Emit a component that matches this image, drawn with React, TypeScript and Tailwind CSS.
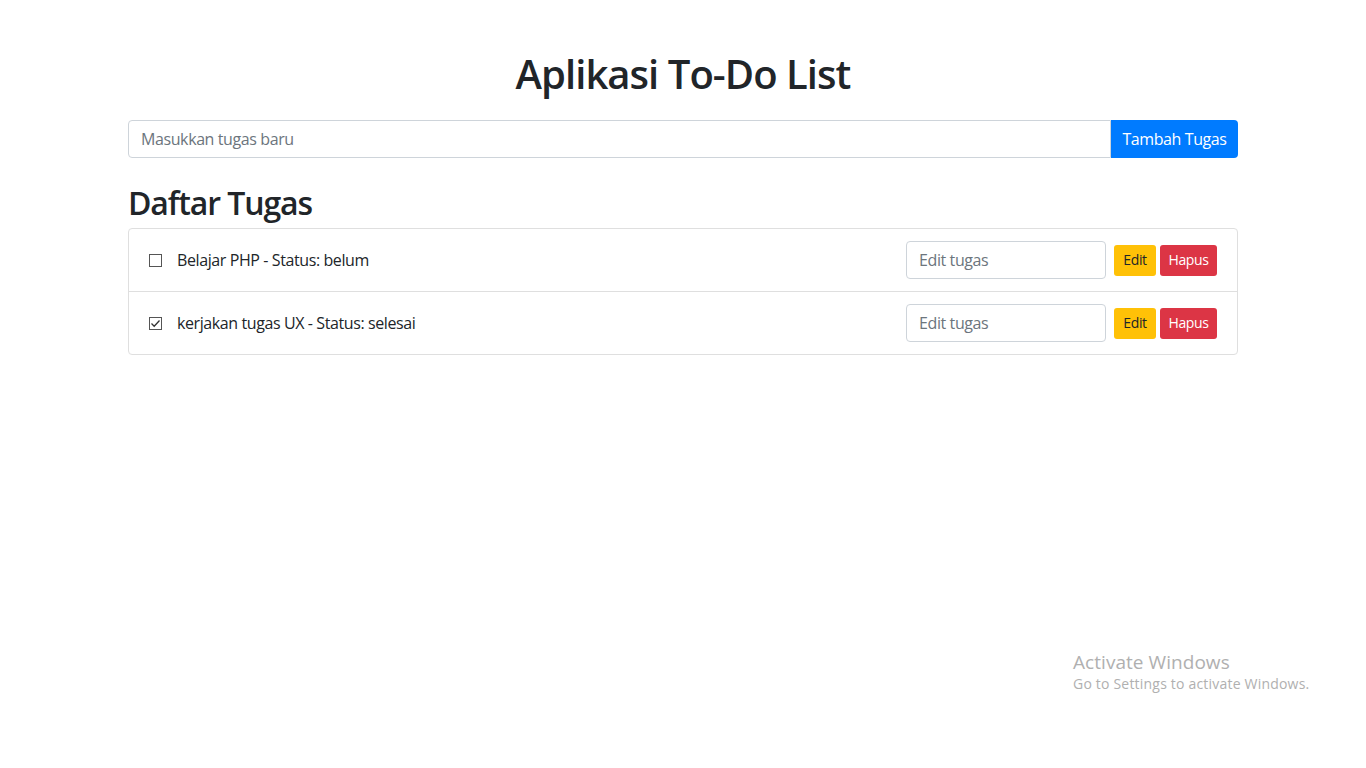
import React from 'react';

const tasks = [
  { id: 1, text: 'Belajar PHP - Status: belum', done: false },
  { id: 2, text: 'kerjakan tugas UX - Status: selesai', done: true },
];

function CheckBox({ checked }: { checked: boolean }) {
  return (
    <span className="w-[13px] h-[13px] border border-[#555] bg-white flex items-center justify-center shrink-0">
      {checked && (
        <svg width="11" height="11" viewBox="0 0 11 11" fill="none">
          <path d="M1.5 5.5 L4.2 8.2 L9.5 2.5" stroke="#333" strokeWidth="1.3" />
        </svg>
      )}
    </span>
  );
}

export default function App() {
  return (
    <div className="min-h-screen bg-white text-[#212529] font-['Open_Sans',sans-serif] relative">
      <div className="w-[1110px] mx-auto pt-12">
        <h1 className="pt-[2px] text-[40px] leading-[48px] font-semibold text-center tracking-[-0.95px]">Aplikasi To-Do List</h1>

        <form className="flex mt-[22px]" onSubmit={(e) => e.preventDefault()}>
          <input
            type="text"
            placeholder="Masukkan tugas baru"
            className="flex-1 h-[38px] px-3 text-base tracking-[-0.4px] border border-[#ced4da] rounded-l-[4px] placeholder:text-[#6c757d] outline-none"
          />
          <button className="w-[127px] h-[38px] bg-[#007bff] text-white text-base tracking-[-0.4px] rounded-r-[4px]">
            Tambah Tugas
          </button>
        </form>

        <h2 className="text-[32px] leading-[38px] font-semibold mt-[26px] mb-[6px] tracking-[-1.1px]">Daftar Tugas</h2>

        <ul className="border border-[#dfdfdf] rounded-[4px]">
          {tasks.map((t, i) => (
            <li
              key={t.id}
              className={`flex items-center px-5 py-3 ${i > 0 ? 'border-t border-[#dfdfdf]' : ''}`}
            >
              <CheckBox checked={t.done} />
              <span className="ml-[15px] text-base tracking-[-0.4px] flex-1">{t.text}</span>
              <input
                type="text"
                placeholder="Edit tugas"
                className="w-[200px] h-[38px] px-3 text-base tracking-[-0.4px] border border-[#ced4da] rounded-[4px] placeholder:text-[#6c757d] outline-none"
              />
              <button className="ml-2 w-[42px] h-[31px] bg-[#ffc107] text-[#212529] text-sm tracking-[-0.4px] rounded-[3px]">
                Edit
              </button>
              <button className="ml-1 w-[57px] h-[31px] bg-[#dc3545] text-white text-sm tracking-[-0.4px] rounded-[3px]">
                Hapus
              </button>
            </li>
          ))}
        </ul>
      </div>

      <div className="absolute left-[1073px] top-[650px] text-[#b0b0b0] font-['Open_Sans',sans-serif]">
        <div className="text-[19px] leading-[24px] tracking-[0.05px]">Activate Windows</div>
        <div className="text-sm leading-[20px] tracking-[0.2px]">Go to Settings to activate Windows.</div>
      </div>
    </div>
  );
}
